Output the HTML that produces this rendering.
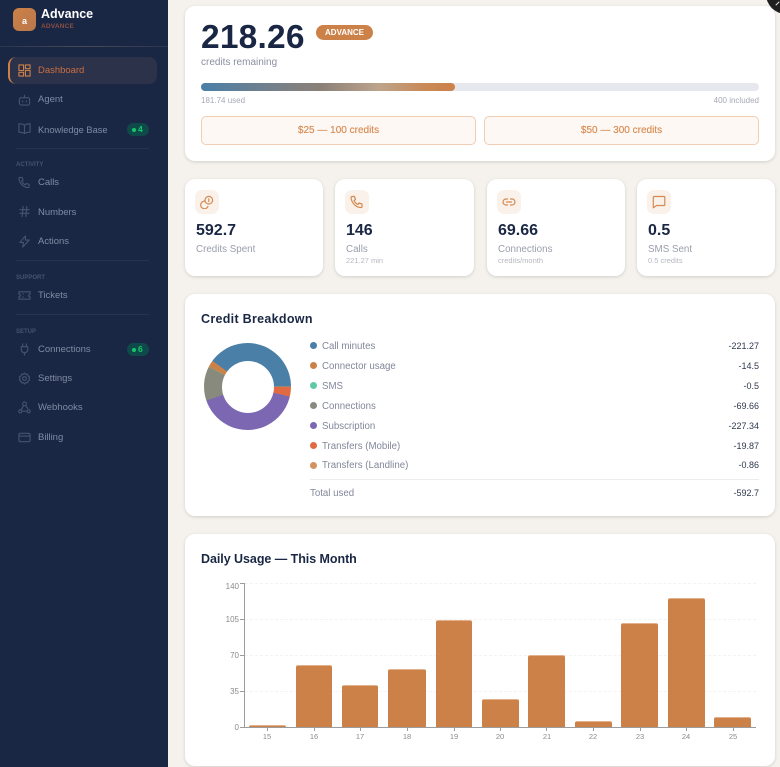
<!DOCTYPE html>
<html><head><meta charset="utf-8"><style>
*{box-sizing:border-box;margin:0;padding:0}
html,body{width:780px;height:767px;overflow:hidden;background:#f5f2ed;font-family:"Liberation Sans",sans-serif}
.a,.t,.c{position:absolute}
.t{white-space:nowrap;line-height:12px;height:12px;margin-top:1px}
.c{background:#fff;border-radius:10px;box-shadow:0 1px 3px rgba(30,30,30,.16)}
#s{position:absolute;left:0;top:0;width:168px;height:767px;background:#1a2744}
.n{color:#7f8ba4;font-size:9.5px;left:38px;letter-spacing:-.02px}
.g{color:#46526e;font-size:6px;font-weight:bold;left:16px}
.d{position:absolute;left:16px;width:133px;height:1px;background:#273450}
.i{position:absolute;left:18px;width:13px;height:13px;fill:none;stroke:#46536e;stroke-width:1.2;stroke-linecap:round;stroke-linejoin:round}
.b{position:absolute;left:127px;width:22px;height:13px;border-radius:7px;background:#0f4a4a;color:#14c76a;font-size:8.5px;font-weight:bold;line-height:13px;padding-left:11px}
.b:before{content:"";position:absolute;left:5px;top:5px;width:4px;height:4px;border-radius:50%;background:#14c76a}
.ib{position:absolute;top:190px;width:24px;height:24px;border-radius:7px;background:#f9f1ea}
.ib svg{position:absolute;left:5px;top:5px;width:14px;height:14px;fill:none;stroke:#d48a52;stroke-width:1.2;stroke-linecap:round;stroke-linejoin:round}
.v{color:#1a2744;font-size:16px;font-weight:bold;line-height:18px;height:18px;top:221px}
.l{color:#9a9eab;font-size:9.8px;top:243px}
.m{color:#b5b8c1;font-size:7.5px;top:254px}
.btn{position:absolute;top:116px;height:29px;background:#fdf8f4;border:1px solid #f0cdb3;border-radius:5px;color:#d98f58;font-size:10px;text-shadow:0 0 .4px #d98f58;text-align:center;line-height:27px}
.dot{position:absolute;left:310px;width:7px;height:7px;border-radius:50%}
.k{left:322px;color:#82879a;font-size:9.7px}
.r{right:21px;color:#30384f;font-size:9px}
.bar{position:absolute;background:#cc8148;border-top:1px solid #e3b08c;border-radius:2px 2px 0 0}
.y{width:20px;text-align:right;left:219px;color:#8a8a8a;font-size:8px}
.x{width:20px;text-align:center;color:#8a8a8a;font-size:7.5px;top:729px}
.gl{position:absolute;left:245px;width:511px;height:0;border-top:1px dashed #f3f3f3}
.ax{position:absolute;background:#9c9c9c}
.tk{position:absolute;top:728px;width:1px;height:3px;background:#9c9c9c}
</style></head><body>

<div id="s">
<div class="a" style="left:13px;top:8px;width:23px;height:23px;border-radius:6px;background:linear-gradient(135deg,#cc8148,#b9784a)"></div>
<div class="t" style="left:13px;top:14px;width:23px;text-align:center;color:#fff;font-size:9px;font-weight:bold">a</div>
<div class="t" style="left:41px;top:7px;color:#fff;font-size:12.5px;font-weight:bold">Advance</div>
<div class="t" style="left:41px;top:20px;color:#8a4f42;font-size:6.5px;font-weight:bold;letter-spacing:.2px">ADVANCE</div>
<div class="a" style="left:0;top:46px;width:168px;height:1px;background:linear-gradient(90deg,#2a3650,#4a4a55 50%,#2a3650)"></div>

<div class="a" style="left:8px;top:57px;width:149px;height:27px;border-radius:8px;background:#2b3249;border-left:2px solid #cc8148"></div>
<svg class="i" style="top:64px;stroke:#cc8148;stroke-width:1.2" viewBox="0 0 14 14"><rect x="1" y="1" width="5" height="6"/><rect x="8" y="1" width="5" height="4"/><rect x="8" y="7" width="5" height="6"/><rect x="1" y="9" width="5" height="4"/></svg>
<div class="t n" style="top:64px;color:#cb6f42">Dashboard</div>

<svg class="i" style="top:93px" viewBox="0 0 14 14"><rect x="1.500" y="5" width="11" height="8" rx="2"/><path d="M7 5V2.500M5 8.500v1M9 8.500v1"/></svg>
<div class="t n" style="top:93px">Agent</div>

<svg class="i" style="top:122px" viewBox="0 0 14 14"><path d="M7 3.500C5.500 2.300 3 2 1 2v9c2 0 4.500.3 6 1.500 1.500-1.200 4-1.500 6-1.500V2c-2 0-4.500.3-6 1.500zM7 3.500v9"/></svg>
<div class="t n" style="top:123px;font-size:9.3px">Knowledge Base</div>
<div class="b" style="top:123px">4</div>
<div class="d" style="top:148px"></div>

<div class="t g" style="top:158px">ACTIVITY</div>
<svg class="i" style="top:176px" viewBox="0 0 14 14"><path d="M2 1.500h2.500l1 3-1.500 1c.8 1.800 2.200 3.200 4 4l1-1.500 3 1v2.500c0 .6-.5 1-1 1C6 12.500 1.500 8 1 2.500c0-.5.4-1 1-1z"/></svg>
<div class="t n" style="top:176px">Calls</div>
<svg class="i" style="top:205px" viewBox="0 0 14 14"><path d="M2 5h10M2 9h10M5.500 1.500l-1 11M9.500 1.500l-1 11"/></svg>
<div class="t n" style="top:206px">Numbers</div>
<svg class="i" style="top:235px" viewBox="0 0 14 14"><path d="M8 1L2 8h4l-1 5 7-7.500H8z"/></svg>
<div class="t n" style="top:235px">Actions</div>
<div class="d" style="top:260px"></div>

<div class="t g" style="top:271px">SUPPORT</div>
<svg class="i" style="top:289px" viewBox="0 0 14 14"><path d="M1 3h12v2.500a1.500 1.500 0 000 3V11H1V8.500a1.500 1.500 0 000-3zM5.500 5v.5M5.500 8.500V9"/></svg>
<div class="t n" style="top:289px">Tickets</div>
<div class="d" style="top:314px"></div>

<div class="t g" style="top:325px">SETUP</div>
<svg class="i" style="top:343px" viewBox="0 0 14 14"><path d="M5 1v3M9 1v3M3.500 4h7v3a3.500 3.500 0 01-7 0zM7 10.500V13"/></svg>
<div class="t n" style="top:343px">Connections</div>
<div class="b" style="top:343px">6</div>
<svg class="i" style="top:372px" viewBox="0 0 14 14"><circle cx="7" cy="7" r="2"/><path d="M7 1l1.200 1.600 2-.3.6 1.900 1.700 1.100-.7 1.700.7 1.700-1.700 1.100-.6 1.900-2-.3L7 13l-1.200-1.600-2 .3-.6-1.900-1.700-1.100.7-1.700-.7-1.700 1.700-1.100.6-1.900 2 .3z"/></svg>
<div class="t n" style="top:372px">Settings</div>
<svg class="i" style="top:401px" viewBox="0 0 14 14"><circle cx="7" cy="3" r="2"/><circle cx="2.500" cy="11" r="1.700"/><circle cx="11.500" cy="11" r="1.700"/><path d="M6 5L3.500 9.500M4.500 11h5M8.500 5l2 3"/></svg>
<div class="t n" style="top:401px">Webhooks</div>
<svg class="i" style="top:431px" viewBox="0 0 14 14"><rect x="1" y="2.500" width="12" height="9" rx="1.500"/><path d="M1 5.500h12"/></svg>
<div class="t n" style="top:431px">Billing</div>
</div>

<div class="c" style="left:185px;top:6px;width:590px;height:155px"></div>
<div class="a" style="left:766px;top:-26px;width:40px;height:40px;border-radius:50%;background:#1f1f1f"></div>
<div class="a" style="left:775px;top:3px;width:5px;height:1px;background:#ddd;transform:rotate(-45deg)"></div>
<div class="t" style="left:201px;top:18px;height:38px;line-height:38px;color:#1a2744;font-size:33.500px;font-weight:bold;letter-spacing:.2px">218.26</div>
<div class="a" style="left:316px;top:25px;width:57px;height:15px;border-radius:8px;background:#cc8148;color:#fff;font-size:8px;font-weight:bold;text-align:center;line-height:15px">ADVANCE</div>
<div class="t" style="left:201px;top:56px;color:#8a8fa0;font-size:10px">credits remaining</div>
<div class="a" style="left:201px;top:83px;width:558px;height:8px;border-radius:4px;background:#e7e8ed"></div>
<div class="a" style="left:201px;top:83px;width:254px;height:8px;border-radius:4px;background:linear-gradient(90deg,#4a7fa7,#7e8084 35%,#8a8078 47%,#bda48b 70%,#c98a58 88%,#cc8148)"></div>
<div class="t" style="left:201px;top:94px;color:#a5a9b4;font-size:8px">181.74 used</div>
<div class="t" style="right:21px;top:94px;color:#a5a9b4;font-size:8px">400 included</div>
<div class="btn" style="left:201px;width:275px">$25 — 100 credits</div>
<div class="btn" style="left:484px;width:275px">$50 — 300 credits</div>

<div class="c" style="left:185px;top:179px;width:138px;height:97px"></div>
<div class="c" style="left:335px;top:179px;width:139px;height:97px"></div>
<div class="c" style="left:487px;top:179px;width:138px;height:97px"></div>
<div class="c" style="left:637px;top:179px;width:138px;height:97px"></div>

<div class="ib" style="left:195px"><svg viewBox="0 0 14 14"><circle cx="8.800" cy="5.200" r="3.800"/><path d="M5 6.200a3.800 3.800 0 103 5.200M8.800 3.800v2.800"/></svg></div>
<div class="ib" style="left:345px"><svg viewBox="0 0 14 14"><path d="M2 1.500h2.500l1 3-1.500 1c.8 1.800 2.200 3.200 4 4l1-1.500 3 1v2.500c0 .6-.5 1-1 1C6 12.500 1.500 8 1 2.500c0-.5.4-1 1-1z"/></svg></div>
<div class="ib" style="left:497px"><svg viewBox="0 0 14 14"><path d="M5.500 4H4a3 3 0 000 6h1.500M8.500 4H10a3 3 0 010 6H8.500M4.500 7h5"/></svg></div>
<div class="ib" style="left:647px"><svg viewBox="0 0 14 14"><path d="M2 1.500h10a.8.8 0 01.8.8v7.400a.8.8 0 01-.8.8H4.500L1.300 12.800V2.300a.8.8 0 01.7-.8z"/></svg></div>

<div class="t v" style="left:196px">592.7</div>
<div class="t l" style="left:196px">Credits Spent</div>
<div class="t v" style="left:346px">146</div>
<div class="t l" style="left:346px">Calls</div>
<div class="t m" style="left:346px">221.27 min</div>
<div class="t v" style="left:498px">69.66</div>
<div class="t l" style="left:498px">Connections</div>
<div class="t m" style="left:498px">credits/month</div>
<div class="t v" style="left:648px">0.5</div>
<div class="t l" style="left:648px">SMS Sent</div>
<div class="t m" style="left:648px">0.5 credits</div>

<div class="c" style="left:185px;top:294px;width:590px;height:222px"></div>
<div class="t" style="left:201px;top:311px;height:14px;line-height:14px;color:#1a2744;font-size:12.500px;font-weight:bold;letter-spacing:.3px">Credit Breakdown</div>
<div class="a" style="left:204px;top:343px;width:87px;height:87px;border-radius:50%;background:conic-gradient(from 90deg,#d4925f 0deg .6deg,#e06a42 .6deg 13.500deg,#7c68b2 13.500deg 161.200deg,#888a7e 161.200deg 206.500deg,#5ec9a5 206.500deg 206.800deg,#cc8148 206.800deg 216.200deg,#4a7fa7 216.200deg 360deg)"></div>
<div class="a" style="left:221.500px;top:360.500px;width:52px;height:52px;border-radius:50%;background:#fff"></div>

<div class="dot" style="top:342px;background:#4a7fa7"></div><div class="t k" style="top:340px">Call minutes</div><div class="t r" style="top:339px">-221.27</div>
<div class="dot" style="top:362px;background:#cc8148"></div><div class="t k" style="top:360px">Connector usage</div><div class="t r" style="top:359px">-14.5</div>
<div class="dot" style="top:382px;background:#5ec9a5"></div><div class="t k" style="top:380px">SMS</div><div class="t r" style="top:379px">-0.5</div>
<div class="dot" style="top:402px;background:#888a7e"></div><div class="t k" style="top:400px">Connections</div><div class="t r" style="top:399px">-69.66</div>
<div class="dot" style="top:422px;background:#7c68b2"></div><div class="t k" style="top:420px">Subscription</div><div class="t r" style="top:419px">-227.34</div>
<div class="dot" style="top:442px;background:#e06a42"></div><div class="t k" style="top:440px">Transfers (Mobile)</div><div class="t r" style="top:439px">-19.87</div>
<div class="dot" style="top:462px;background:#d4925f"></div><div class="t k" style="top:459px">Transfers (Landline)</div><div class="t r" style="top:458px">-0.86</div>
<div class="a" style="left:310px;top:479px;width:449px;height:1px;background:#ececec"></div>
<div class="t k" style="left:310px;top:487px">Total used</div><div class="t r" style="top:486px">-592.7</div>

<div class="c" style="left:185px;top:534px;width:590px;height:232px"></div>
<div class="t" style="left:201px;top:551px;height:14px;line-height:14px;color:#1a2744;font-size:12.500px;font-weight:bold;letter-spacing:-.05px">Daily Usage — This Month</div>

<div class="gl" style="top:583px"></div><div class="gl" style="top:619px"></div><div class="gl" style="top:655px"></div><div class="gl" style="top:691px"></div>
<div class="t y" style="top:580px">140</div><div class="t y" style="top:613px">105</div><div class="t y" style="top:649px">70</div><div class="t y" style="top:685px">35</div><div class="t y" style="top:721px">0</div>

<div class="bar" style="left:249px;width:37px;top:725px;height:2px"></div>
<div class="bar" style="left:296px;width:36px;top:665px;height:62px"></div>
<div class="bar" style="left:342px;width:36px;top:685px;height:42px"></div>
<div class="bar" style="left:388px;width:38px;top:669px;height:58px"></div>
<div class="bar" style="left:436px;width:36px;top:620px;height:107px"></div>
<div class="bar" style="left:482px;width:37px;top:699px;height:28px"></div>
<div class="bar" style="left:528px;width:37px;top:655px;height:72px"></div>
<div class="bar" style="left:575px;width:37px;top:721px;height:6px"></div>
<div class="bar" style="left:621px;width:37px;top:623px;height:104px"></div>
<div class="bar" style="left:668px;width:37px;top:598px;height:129px"></div>
<div class="bar" style="left:714px;width:37px;top:717px;height:10px"></div>

<div class="ax" style="left:244px;top:583px;width:1px;height:144px"></div>
<div class="ax" style="left:240px;top:583px;width:4px;height:1px"></div>
<div class="ax" style="left:240px;top:619px;width:4px;height:1px"></div>
<div class="ax" style="left:240px;top:655px;width:4px;height:1px"></div>
<div class="ax" style="left:240px;top:691px;width:4px;height:1px"></div>
<div class="ax" style="left:240px;top:727px;width:516px;height:1px"></div>

<div class="tk" style="left:267px"></div><div class="tk" style="left:314px"></div><div class="tk" style="left:360px"></div><div class="tk" style="left:407px"></div><div class="tk" style="left:454px"></div><div class="tk" style="left:500px"></div><div class="tk" style="left:546px"></div><div class="tk" style="left:593px"></div><div class="tk" style="left:640px"></div><div class="tk" style="left:686px"></div><div class="tk" style="left:733px"></div>

<div class="t x" style="left:257px;top:730px">15</div><div class="t x" style="left:304px;top:730px">16</div><div class="t x" style="left:350px;top:730px">17</div><div class="t x" style="left:397px;top:730px">18</div><div class="t x" style="left:444px;top:730px">19</div><div class="t x" style="left:490px;top:730px">20</div><div class="t x" style="left:537px;top:730px">21</div><div class="t x" style="left:583px;top:730px">22</div><div class="t x" style="left:630px;top:730px">23</div><div class="t x" style="left:676px;top:730px">24</div><div class="t x" style="left:723px;top:730px">25</div>
</body></html>
